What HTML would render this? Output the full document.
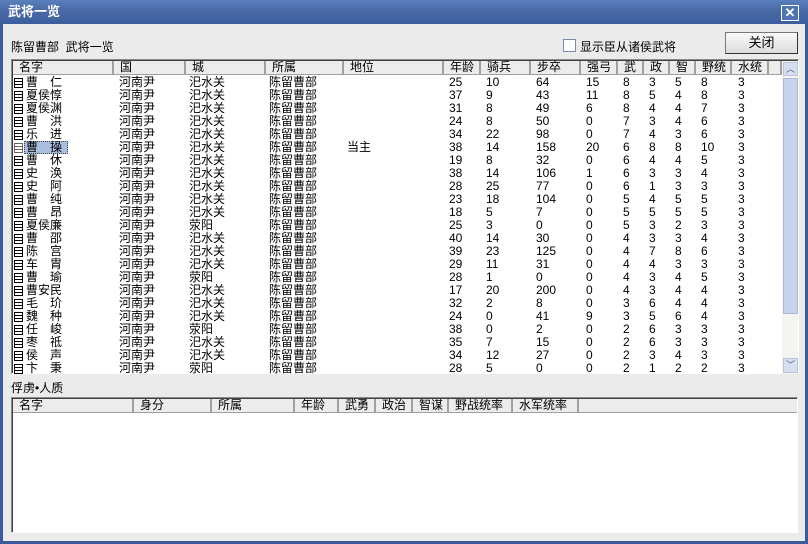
<!DOCTYPE html>
<html><head><meta charset="utf-8">
<style>
*{margin:0;padding:0;box-sizing:border-box}
body{width:808px;height:544px;overflow:hidden;background:#5a6e3a;font-family:"Liberation Sans","WenQuanYi Zen Hei","Noto Sans CJK SC",sans-serif;font-size:12px;color:#000;position:relative}
.win{position:absolute;left:0;top:0;width:808px;height:544px;background:#ebebeb;border:3px solid #3a5a9a;border-top:none}
.title{position:absolute;left:0;top:0;width:808px;height:24px;background:linear-gradient(#5a7fbd,#4a6ba8 40%,#3d5e9c);color:#fff;font-weight:bold;font-size:13px;line-height:24px;padding-left:8px}
.xbtn{position:absolute;left:781px;top:5px;width:18px;height:16px;background:#4f74b4;border:1px solid #fff;color:#fff;font-size:13px;line-height:13px;text-align:center;font-weight:bold}
.abs{position:absolute;white-space:nowrap}
.list{position:absolute;background:#fff;border:1px solid #8a8a8a;border-right-color:#fff;border-bottom-color:#fff;box-shadow:inset 1px 1px 0 #404040}
.hdr{position:absolute;top:1px;height:14px;background:#ececec;border-right:2px solid #a0a0a0;border-bottom:1px solid #a0a0a0;line-height:13px;padding-left:6px;white-space:nowrap}
.row{position:absolute;left:0;height:13px;line-height:13px;width:770px}
.row span{position:absolute;top:0;white-space:nowrap}
.ic{position:absolute;left:3px;top:2px;width:9px;height:10px;border:1px solid #000;background:linear-gradient(#fff 2px,#000 2px,#000 3px,#fff 3px,#fff 5px,#000 5px,#000 6px,#fff 6px)}
.sel{position:absolute;left:13px;top:0;width:44px;height:13px;background:#a8bedf;border:1px dotted #444}
.btn{position:absolute;left:725px;top:32px;width:73px;height:22px;background:linear-gradient(#fafafa,#dcdcdc);border:1px solid #777;border-right-color:#333;border-bottom-color:#333;text-align:center;line-height:20px;font-size:13px}
</style></head><body>
<div class="win"></div>
<div class="title">武将一览</div>
<div class="xbtn">✕</div>
<div class="abs" style="left:11px;top:38px;font-size:12px">陈留曹部&nbsp; 武将一览</div>
<div class="abs" style="left:563px;top:39px;width:13px;height:13px;background:#fff;border:1px solid #7a8aa8"></div>
<div class="abs" style="left:580px;top:38px;font-size:12px">显示臣从诸侯武将</div>
<div class="btn">关闭</div>

<div class="list" style="left:11px;top:59px;width:788px;height:315px">
<div class="hdr" style="left:1px;width:101px">名字</div>
<div class="hdr" style="left:102px;width:72px">国</div>
<div class="hdr" style="left:174px;width:80px">城</div>
<div class="hdr" style="left:254px;width:78px">所属</div>
<div class="hdr" style="left:332px;width:100px">地位</div>
<div class="hdr" style="left:432px;width:37px">年龄</div>
<div class="hdr" style="left:469px;width:50px">骑兵</div>
<div class="hdr" style="left:519px;width:50px">步卒</div>
<div class="hdr" style="left:569px;width:37px">强弓</div>
<div class="hdr" style="left:606px;width:26px">武</div>
<div class="hdr" style="left:632px;width:26px">政</div>
<div class="hdr" style="left:658px;width:26px">智</div>
<div class="hdr" style="left:684px;width:36px">野统</div>
<div class="hdr" style="left:720px;width:37px">水统</div>
<div class="hdr" style="left:757px;width:13px"></div>
<div style="position:absolute;left:770px;top:1px;width:16px;height:313px;background:#f4f4f0">
 <div style="position:absolute;left:1px;top:1px;width:15px;height:14px;background:#d6def0;border:1px solid #b8c4dc;font-size:9px;text-align:center;line-height:12px;color:#4d6185">︿</div>
 <div style="position:absolute;left:1px;top:17px;width:15px;height:236px;background:#c8d3ec;border:1px solid #a9b8d8"></div>
 <div style="position:absolute;left:1px;top:297px;width:15px;height:15px;background:#d6def0;border:1px solid #b8c4dc;font-size:9px;text-align:center;line-height:12px;color:#4d6185">﹀</div>
</div>
</div>

<div class="abs" style="left:11px;top:379px">俘虏•人质</div>
<div class="list" style="left:11px;top:397px;width:787px;height:136px">
<div class="hdr" style="left:1px;width:121px">名字</div>
<div class="hdr" style="left:122px;width:78px">身分</div>
<div class="hdr" style="left:200px;width:83px">所属</div>
<div class="hdr" style="left:283px;width:44px">年龄</div>
<div class="hdr" style="left:327px;width:37px">武勇</div>
<div class="hdr" style="left:364px;width:37px">政治</div>
<div class="hdr" style="left:401px;width:36px">智谋</div>
<div class="hdr" style="left:437px;width:64px">野战统率</div>
<div class="hdr" style="left:501px;width:66px">水军统率</div>
<div class="hdr" style="left:567px;width:218px;border-right:none"></div>
</div>

<div style="position:absolute;left:11px;top:76px">
<div class="row" style="top:0"><div class="ic"></div><span style="left:15px">曹　仁</span><span style="left:108px">河南尹</span><span style="left:178px">汜水关</span><span style="left:258px">陈留曹部</span><span style="left:438px">25</span><span style="left:475px">10</span><span style="left:525px">64</span><span style="left:575px">15</span><span style="left:612px">8</span><span style="left:638px">3</span><span style="left:664px">5</span><span style="left:690px">8</span><span style="left:727px">3</span></div>
<div class="row" style="top:13px"><div class="ic"></div><span style="left:15px">夏侯惇</span><span style="left:108px">河南尹</span><span style="left:178px">汜水关</span><span style="left:258px">陈留曹部</span><span style="left:438px">37</span><span style="left:475px">9</span><span style="left:525px">43</span><span style="left:575px">11</span><span style="left:612px">8</span><span style="left:638px">5</span><span style="left:664px">4</span><span style="left:690px">8</span><span style="left:727px">3</span></div>
<div class="row" style="top:26px"><div class="ic"></div><span style="left:15px">夏侯渊</span><span style="left:108px">河南尹</span><span style="left:178px">汜水关</span><span style="left:258px">陈留曹部</span><span style="left:438px">31</span><span style="left:475px">8</span><span style="left:525px">49</span><span style="left:575px">6</span><span style="left:612px">8</span><span style="left:638px">4</span><span style="left:664px">4</span><span style="left:690px">7</span><span style="left:727px">3</span></div>
<div class="row" style="top:39px"><div class="ic"></div><span style="left:15px">曹　洪</span><span style="left:108px">河南尹</span><span style="left:178px">汜水关</span><span style="left:258px">陈留曹部</span><span style="left:438px">24</span><span style="left:475px">8</span><span style="left:525px">50</span><span style="left:575px">0</span><span style="left:612px">7</span><span style="left:638px">3</span><span style="left:664px">4</span><span style="left:690px">6</span><span style="left:727px">3</span></div>
<div class="row" style="top:52px"><div class="ic"></div><span style="left:15px">乐　进</span><span style="left:108px">河南尹</span><span style="left:178px">汜水关</span><span style="left:258px">陈留曹部</span><span style="left:438px">34</span><span style="left:475px">22</span><span style="left:525px">98</span><span style="left:575px">0</span><span style="left:612px">7</span><span style="left:638px">4</span><span style="left:664px">3</span><span style="left:690px">6</span><span style="left:727px">3</span></div>
<div class="row" style="top:65px"><div class="sel"></div><div class="ic" style="opacity:.6"></div><span style="left:15px">曹　操</span><span style="left:108px">河南尹</span><span style="left:178px">汜水关</span><span style="left:258px">陈留曹部</span><span style="left:336px">当主</span><span style="left:438px">38</span><span style="left:475px">14</span><span style="left:525px">158</span><span style="left:575px">20</span><span style="left:612px">6</span><span style="left:638px">8</span><span style="left:664px">8</span><span style="left:690px">10</span><span style="left:727px">3</span></div>
<div class="row" style="top:78px"><div class="ic"></div><span style="left:15px">曹　休</span><span style="left:108px">河南尹</span><span style="left:178px">汜水关</span><span style="left:258px">陈留曹部</span><span style="left:438px">19</span><span style="left:475px">8</span><span style="left:525px">32</span><span style="left:575px">0</span><span style="left:612px">6</span><span style="left:638px">4</span><span style="left:664px">4</span><span style="left:690px">5</span><span style="left:727px">3</span></div>
<div class="row" style="top:91px"><div class="ic"></div><span style="left:15px">史　涣</span><span style="left:108px">河南尹</span><span style="left:178px">汜水关</span><span style="left:258px">陈留曹部</span><span style="left:438px">38</span><span style="left:475px">14</span><span style="left:525px">106</span><span style="left:575px">1</span><span style="left:612px">6</span><span style="left:638px">3</span><span style="left:664px">3</span><span style="left:690px">4</span><span style="left:727px">3</span></div>
<div class="row" style="top:104px"><div class="ic"></div><span style="left:15px">史　阿</span><span style="left:108px">河南尹</span><span style="left:178px">汜水关</span><span style="left:258px">陈留曹部</span><span style="left:438px">28</span><span style="left:475px">25</span><span style="left:525px">77</span><span style="left:575px">0</span><span style="left:612px">6</span><span style="left:638px">1</span><span style="left:664px">3</span><span style="left:690px">3</span><span style="left:727px">3</span></div>
<div class="row" style="top:117px"><div class="ic"></div><span style="left:15px">曹　纯</span><span style="left:108px">河南尹</span><span style="left:178px">汜水关</span><span style="left:258px">陈留曹部</span><span style="left:438px">23</span><span style="left:475px">18</span><span style="left:525px">104</span><span style="left:575px">0</span><span style="left:612px">5</span><span style="left:638px">4</span><span style="left:664px">5</span><span style="left:690px">5</span><span style="left:727px">3</span></div>
<div class="row" style="top:130px"><div class="ic"></div><span style="left:15px">曹　昂</span><span style="left:108px">河南尹</span><span style="left:178px">汜水关</span><span style="left:258px">陈留曹部</span><span style="left:438px">18</span><span style="left:475px">5</span><span style="left:525px">7</span><span style="left:575px">0</span><span style="left:612px">5</span><span style="left:638px">5</span><span style="left:664px">5</span><span style="left:690px">5</span><span style="left:727px">3</span></div>
<div class="row" style="top:143px"><div class="ic"></div><span style="left:15px">夏侯廉</span><span style="left:108px">河南尹</span><span style="left:178px">荥阳</span><span style="left:258px">陈留曹部</span><span style="left:438px">25</span><span style="left:475px">3</span><span style="left:525px">0</span><span style="left:575px">0</span><span style="left:612px">5</span><span style="left:638px">3</span><span style="left:664px">2</span><span style="left:690px">3</span><span style="left:727px">3</span></div>
<div class="row" style="top:156px"><div class="ic"></div><span style="left:15px">曹　邵</span><span style="left:108px">河南尹</span><span style="left:178px">汜水关</span><span style="left:258px">陈留曹部</span><span style="left:438px">40</span><span style="left:475px">14</span><span style="left:525px">30</span><span style="left:575px">0</span><span style="left:612px">4</span><span style="left:638px">3</span><span style="left:664px">3</span><span style="left:690px">4</span><span style="left:727px">3</span></div>
<div class="row" style="top:169px"><div class="ic"></div><span style="left:15px">陈　宫</span><span style="left:108px">河南尹</span><span style="left:178px">汜水关</span><span style="left:258px">陈留曹部</span><span style="left:438px">39</span><span style="left:475px">23</span><span style="left:525px">125</span><span style="left:575px">0</span><span style="left:612px">4</span><span style="left:638px">7</span><span style="left:664px">8</span><span style="left:690px">6</span><span style="left:727px">3</span></div>
<div class="row" style="top:182px"><div class="ic"></div><span style="left:15px">车　胄</span><span style="left:108px">河南尹</span><span style="left:178px">汜水关</span><span style="left:258px">陈留曹部</span><span style="left:438px">29</span><span style="left:475px">11</span><span style="left:525px">31</span><span style="left:575px">0</span><span style="left:612px">4</span><span style="left:638px">4</span><span style="left:664px">3</span><span style="left:690px">3</span><span style="left:727px">3</span></div>
<div class="row" style="top:195px"><div class="ic"></div><span style="left:15px">曹　瑜</span><span style="left:108px">河南尹</span><span style="left:178px">荥阳</span><span style="left:258px">陈留曹部</span><span style="left:438px">28</span><span style="left:475px">1</span><span style="left:525px">0</span><span style="left:575px">0</span><span style="left:612px">4</span><span style="left:638px">3</span><span style="left:664px">4</span><span style="left:690px">5</span><span style="left:727px">3</span></div>
<div class="row" style="top:208px"><div class="ic"></div><span style="left:15px">曹安民</span><span style="left:108px">河南尹</span><span style="left:178px">汜水关</span><span style="left:258px">陈留曹部</span><span style="left:438px">17</span><span style="left:475px">20</span><span style="left:525px">200</span><span style="left:575px">0</span><span style="left:612px">4</span><span style="left:638px">3</span><span style="left:664px">4</span><span style="left:690px">4</span><span style="left:727px">3</span></div>
<div class="row" style="top:221px"><div class="ic"></div><span style="left:15px">毛　玠</span><span style="left:108px">河南尹</span><span style="left:178px">汜水关</span><span style="left:258px">陈留曹部</span><span style="left:438px">32</span><span style="left:475px">2</span><span style="left:525px">8</span><span style="left:575px">0</span><span style="left:612px">3</span><span style="left:638px">6</span><span style="left:664px">4</span><span style="left:690px">4</span><span style="left:727px">3</span></div>
<div class="row" style="top:234px"><div class="ic"></div><span style="left:15px">魏　种</span><span style="left:108px">河南尹</span><span style="left:178px">汜水关</span><span style="left:258px">陈留曹部</span><span style="left:438px">24</span><span style="left:475px">0</span><span style="left:525px">41</span><span style="left:575px">9</span><span style="left:612px">3</span><span style="left:638px">5</span><span style="left:664px">6</span><span style="left:690px">4</span><span style="left:727px">3</span></div>
<div class="row" style="top:247px"><div class="ic"></div><span style="left:15px">任　峻</span><span style="left:108px">河南尹</span><span style="left:178px">荥阳</span><span style="left:258px">陈留曹部</span><span style="left:438px">38</span><span style="left:475px">0</span><span style="left:525px">2</span><span style="left:575px">0</span><span style="left:612px">2</span><span style="left:638px">6</span><span style="left:664px">3</span><span style="left:690px">3</span><span style="left:727px">3</span></div>
<div class="row" style="top:260px"><div class="ic"></div><span style="left:15px">枣　祗</span><span style="left:108px">河南尹</span><span style="left:178px">汜水关</span><span style="left:258px">陈留曹部</span><span style="left:438px">35</span><span style="left:475px">7</span><span style="left:525px">15</span><span style="left:575px">0</span><span style="left:612px">2</span><span style="left:638px">6</span><span style="left:664px">3</span><span style="left:690px">3</span><span style="left:727px">3</span></div>
<div class="row" style="top:273px"><div class="ic"></div><span style="left:15px">侯　声</span><span style="left:108px">河南尹</span><span style="left:178px">汜水关</span><span style="left:258px">陈留曹部</span><span style="left:438px">34</span><span style="left:475px">12</span><span style="left:525px">27</span><span style="left:575px">0</span><span style="left:612px">2</span><span style="left:638px">3</span><span style="left:664px">4</span><span style="left:690px">3</span><span style="left:727px">3</span></div>
<div class="row" style="top:286px"><div class="ic"></div><span style="left:15px">卞　秉</span><span style="left:108px">河南尹</span><span style="left:178px">荥阳</span><span style="left:258px">陈留曹部</span><span style="left:438px">28</span><span style="left:475px">5</span><span style="left:525px">0</span><span style="left:575px">0</span><span style="left:612px">2</span><span style="left:638px">1</span><span style="left:664px">2</span><span style="left:690px">2</span><span style="left:727px">3</span></div>
</div>
</body></html>
